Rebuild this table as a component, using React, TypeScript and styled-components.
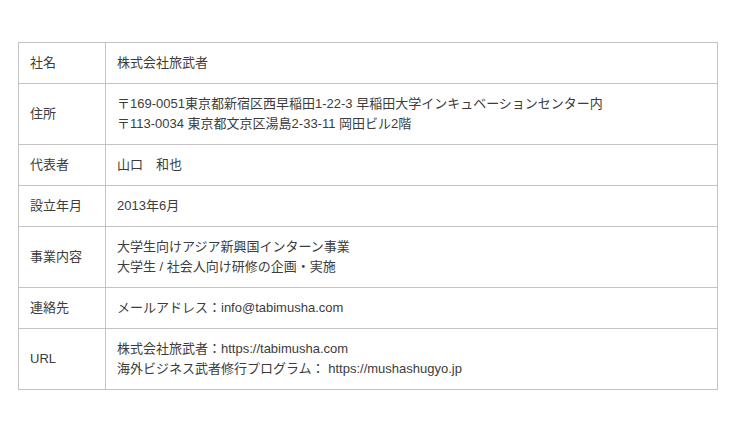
import React from "react";
import styled, { createGlobalStyle } from "styled-components";

const GlobalStyle = createGlobalStyle`
  body {
    margin: 0;
    background: #ffffff;
    font-family: "Liberation Sans", "Noto Sans CJK JP", sans-serif;
    color: #3c3c3c;
  }
`;

const Page = styled.div`
  padding: 42px 0 0 18px;
`;

const Table = styled.table`
  width: 700px;
  border-collapse: collapse;
  font-size: 13px;
  line-height: 20px;
`;

const Head = styled.th`
  width: 64px;
  padding: 10px 11px;
  border: 1px solid #c4c4c4;
  text-align: left;
  font-weight: 400;
  vertical-align: middle;
`;

const Cell = styled.td`
  padding: 10px 11px;
  border: 1px solid #c4c4c4;
  vertical-align: middle;
`;

type Row = { label: string; lines: string[] };

const rows: Row[] = [
  { label: "社名", lines: ["株式会社旅武者"] },
  {
    label: "住所",
    lines: [
      "〒169-0051東京都新宿区西早稲田1-22-3 早稲田大学インキュベーションセンター内",
      "〒113-0034 東京都文京区湯島2-33-11 岡田ビル2階",
    ],
  },
  { label: "代表者", lines: ["山口\u3000和也"] },
  { label: "設立年月", lines: ["2013年6月"] },
  {
    label: "事業内容",
    lines: ["大学生向けアジア新興国インターン事業", "大学生 / 社会人向け研修の企画・実施"],
  },
  { label: "連絡先", lines: ["メールアドレス：info@tabimusha.com"] },
  {
    label: "URL",
    lines: [
      "株式会社旅武者：https://tabimusha.com",
      "海外ビジネス武者修行プログラム： https://mushashugyo.jp",
    ],
  },
];

const App: React.FC = () => {
  return (
    <Page>
      <GlobalStyle />
      <Table>
        <tbody>
          {rows.map((row) => (
            <tr key={row.label}>
              <Head>{row.label}</Head>
              <Cell>
                {row.lines.map((line, i) => (
                  <React.Fragment key={i}>
                    {i > 0 && <br />}
                    {line}
                  </React.Fragment>
                ))}
              </Cell>
            </tr>
          ))}
        </tbody>
      </Table>
    </Page>
  );
};

export default App;
